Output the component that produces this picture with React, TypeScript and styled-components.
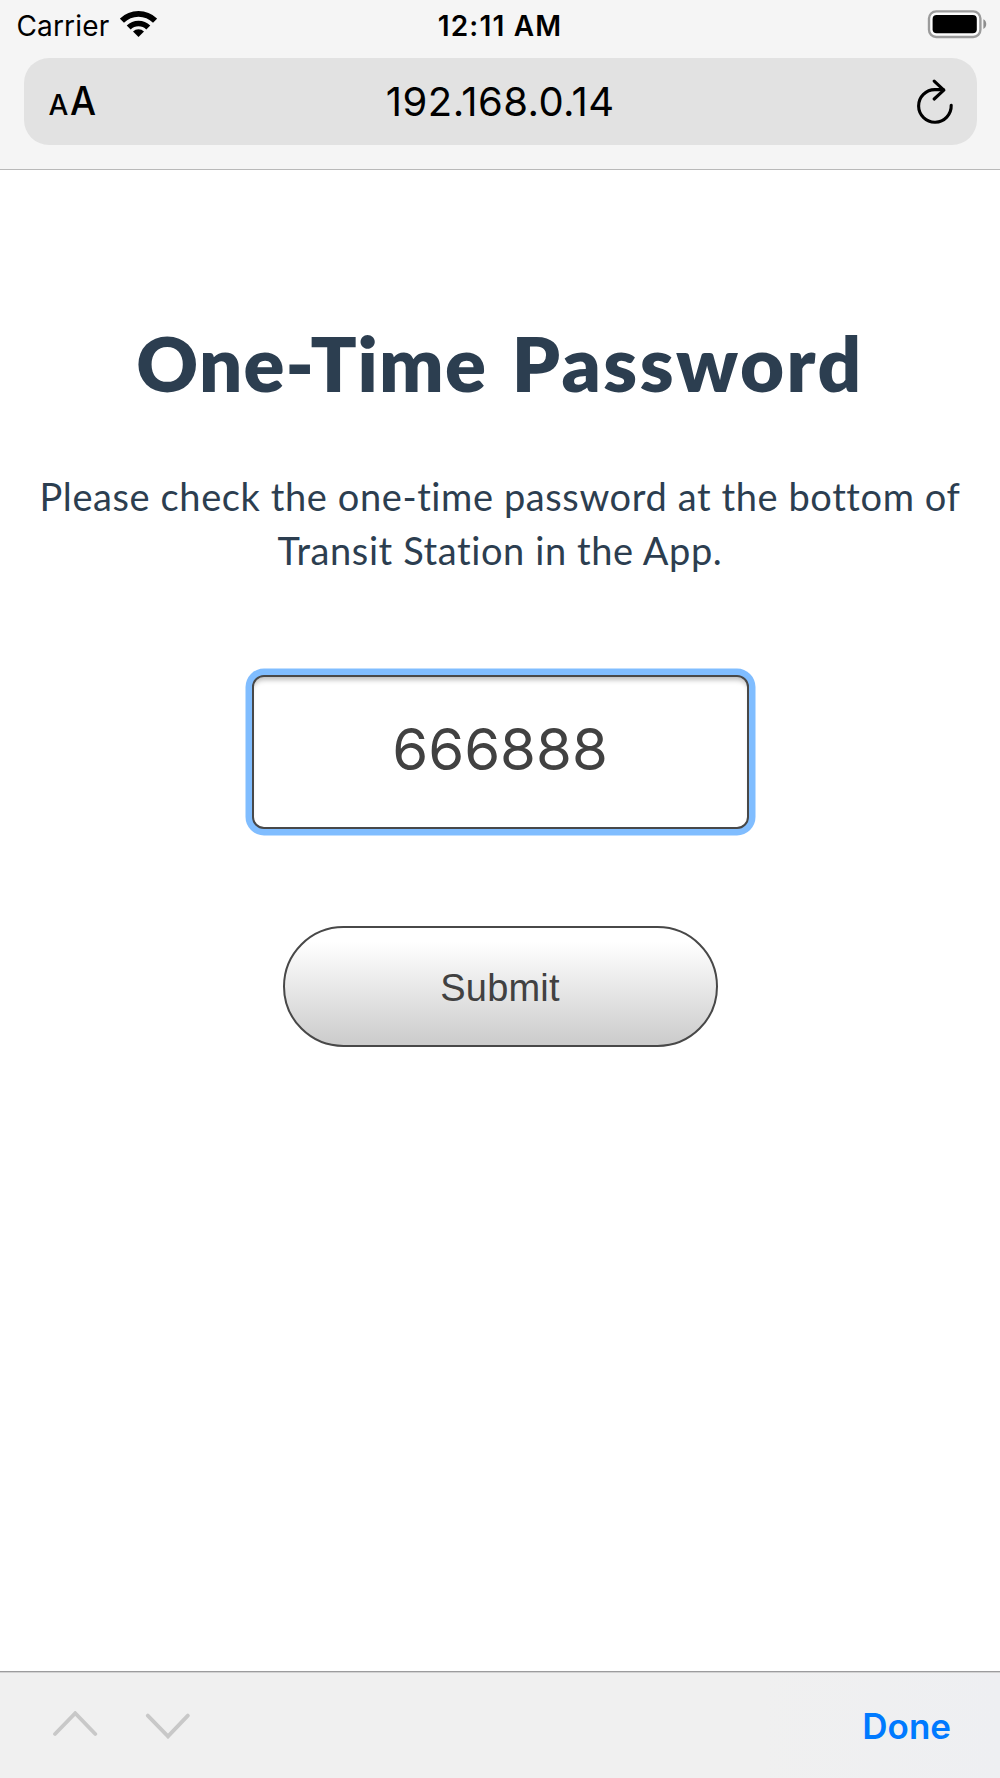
import React from 'react';
import styled, { createGlobalStyle } from 'styled-components';

const GlobalStyle = createGlobalStyle`
  *, *::before, *::after { box-sizing: border-box; }
  body { margin: 0; background: #fff; }
`;

const uiFont = `Inter, "Liberation Sans", sans-serif`;

const Screen = styled.div`
  display: flex;
  flex-direction: column;
  width: 1000px;
  height: 1778px;
  overflow: hidden;
  background: #fff;
  font-family: ${uiFont};
`;

const BrowserHeader = styled.header`
  height: 170px;
  background: #f5f5f5;
  border-bottom: 1px solid #b9b9b9;
`;

const StatusBar = styled.div`
  display: grid;
  grid-template-columns: 1fr auto 1fr;
  height: 52px;
  padding: 0 13.5px 0 16.5px;
  font-size: 28px;
  line-height: 52px;
  color: #000;
`;

const Carrier = styled.div`
  display: flex;
  gap: 11px;
  letter-spacing: 0.15px;
`;

const WifiIcon = styled.svg`
  margin-top: 10px;
`;

const Clock = styled.time`
  font-weight: 600;
  letter-spacing: 1.2px;
  padding-right: 3px;
`;

const BatteryIcon = styled.svg`
  justify-self: end;
  margin-top: 9px;
`;

const AddressBar = styled.div`
  display: grid;
  grid-template-columns: 1fr auto 1fr;
  align-items: center;
  height: 87px;
  margin: 6px 23.5px 0;
  padding: 0 22.5px 0 25px;
  border-radius: 25px;
  background: #e2e2e2;
  font-size: 40px;
  line-height: 50px;
  color: #000;
`;

const TextSize = styled.div`
  display: flex;
  align-items: baseline;
  gap: 2px;
  padding-top: 3px;
  font-weight: 450;
`;

const SmallLetter = styled.span`
  font-size: 28px;
`;

const LargeLetter = styled.span`
  font-size: 40px;
  transform: scaleX(0.92);
  transform-origin: left;
`;

const Address = styled.span`
  letter-spacing: 0.45px;
  padding-right: 2px;
`;

const ReloadIcon = styled.svg`
  justify-self: end;
`;

const Page = styled.main`
  flex: 1;
  display: flex;
  flex-direction: column;
  align-items: center;
  padding-top: 147px;
  color: #2c3e50;
  font-family: Lato, "Open Sans", sans-serif;
  font-variant-ligatures: none;
`;

const Title = styled.h1`
  margin: 0;
  font-size: 76px;
  font-weight: 800;
  line-height: 92px;
  white-space: nowrap;
  word-spacing: 7px;
`;

const Word = styled.span<{ $tracking: number }>`
  letter-spacing: ${({ $tracking }) => $tracking}px;
`;

const Hint = styled.p`
  width: 960px;
  margin: 61px 0 0;
  font-size: 38px;
  line-height: 53.6px;
  letter-spacing: 0.6px;
  text-align: center;
`;

const CodeInput = styled.input`
  width: 497px;
  height: 154px;
  margin: 97.5px 0 0;
  padding: 0 0 5px;
  border: 2.4px solid #484848;
  border-radius: 12px;
  outline: none;
  background: #fff;
  box-shadow: 0 0 0 6.5px #80bdff, inset 0 6px 5px -3px rgba(0, 0, 0, 0.26);
  color: #414141;
  font: 400 58px/70px ${uiFont};
  text-align: center;
`;

const SubmitButton = styled.button`
  width: 435px;
  height: 121px;
  margin: 97px 0 0;
  padding: 3px 0 0;
  border: 2.4px solid #484848;
  border-radius: 61px;
  background: linear-gradient(#fff 12%, #cdcdcd 97%);
  color: #414141;
  font: 400 38px/44px "Liberation Sans", Arial, sans-serif;
  letter-spacing: 0.2px;
`;

const KeyboardBar = styled.footer`
  display: flex;
  align-items: center;
  justify-content: space-between;
  height: 107px;
  padding: 2px 49px 0 52px;
  border-top: 1px solid #9c9c9e;
  box-shadow: inset 0 1px 0 #d2d2d3;
  background: linear-gradient(90deg, #f0f0f0 76%, #eeeff2 100%);
`;

const Arrows = styled.div`
  display: flex;
  gap: 47px;
  padding-bottom: 3px;
`;

const Done = styled.span`
  color: #007aff;
  font-size: 35px;
  font-weight: 600;
  line-height: 44px;
`;

export default function App() {
  return (
    <Screen>
      <GlobalStyle />
      <BrowserHeader>
        <StatusBar>
          <Carrier>
            Carrier
            <WifiIcon width="37" height="28" viewBox="0 0 37 28">
              <g fill="none" stroke="#000">
                <path d="M1.9 10.7a23.5 23.5 0 0 1 33.2 0" strokeWidth="5.9" />
                <path d="M8.7 17.5a13.9 13.9 0 0 1 19.6 0" strokeWidth="5.6" />
              </g>
              <path d="M18.5 27l-5.5-5.4a7.8 7.8 0 0 1 11 0z" />
            </WifiIcon>
          </Carrier>
          <Clock>12:11 AM</Clock>
          <BatteryIcon width="60" height="30" viewBox="0 0 60 30">
            <rect x="2" y="2.4" width="51.4" height="25.6" rx="7.2" fill="#fcfcfc" stroke="#9b9b9b" strokeWidth="2.4" />
            <rect x="5.6" y="6" width="44.2" height="18.2" rx="4" />
            <path d="M56.4 10.2c3.8 1.6 3.8 8.2 0 9.8z" fill="#8e8e8e" />
          </BatteryIcon>
        </StatusBar>
        <AddressBar>
          <TextSize>
            <SmallLetter>A</SmallLetter>
            <LargeLetter>A</LargeLetter>
          </TextSize>
          <Address>192.168.0.14</Address>
          <ReloadIcon
            width="38"
            height="46"
            viewBox="0 0 38 46"
            fill="none"
            stroke="#000"
            strokeWidth="3.1"
            strokeLinecap="round"
            strokeLinejoin="round"
          >
            <path d="M35.2 26.3A16.3 16.3 0 1 1 19 10.6h8.4" />
            <path d="M18.2 2.1l9.6 9.1-9.6 8.8" />
          </ReloadIcon>
        </AddressBar>
      </BrowserHeader>
      <Page>
        <Title>
          <Word $tracking={1.2}>One-Time</Word> <Word $tracking={2.5}>Password</Word>
        </Title>
        <Hint>Please check the one-time password at the bottom of Transit Station in the App.</Hint>
        <CodeInput type="text" defaultValue="666888" aria-label="One-Time Password" />
        <SubmitButton type="button">Submit</SubmitButton>
      </Page>
      <KeyboardBar>
        <Arrows>
          <svg width="46" height="28" viewBox="0 0 46 28" fill="none" stroke="#c8c8c8" strokeWidth="3.8" strokeLinecap="round">
            <path d="M3 23L23.2 2.2 43.3 23" />
          </svg>
          <svg width="46" height="28" viewBox="0 0 46 28" fill="none" stroke="#c8c8c8" strokeWidth="3.8" strokeLinecap="round">
            <path d="M2.8 4.6L23 25.4 42.8 4.6" />
          </svg>
        </Arrows>
        <Done>Done</Done>
      </KeyboardBar>
    </Screen>
  );
}
